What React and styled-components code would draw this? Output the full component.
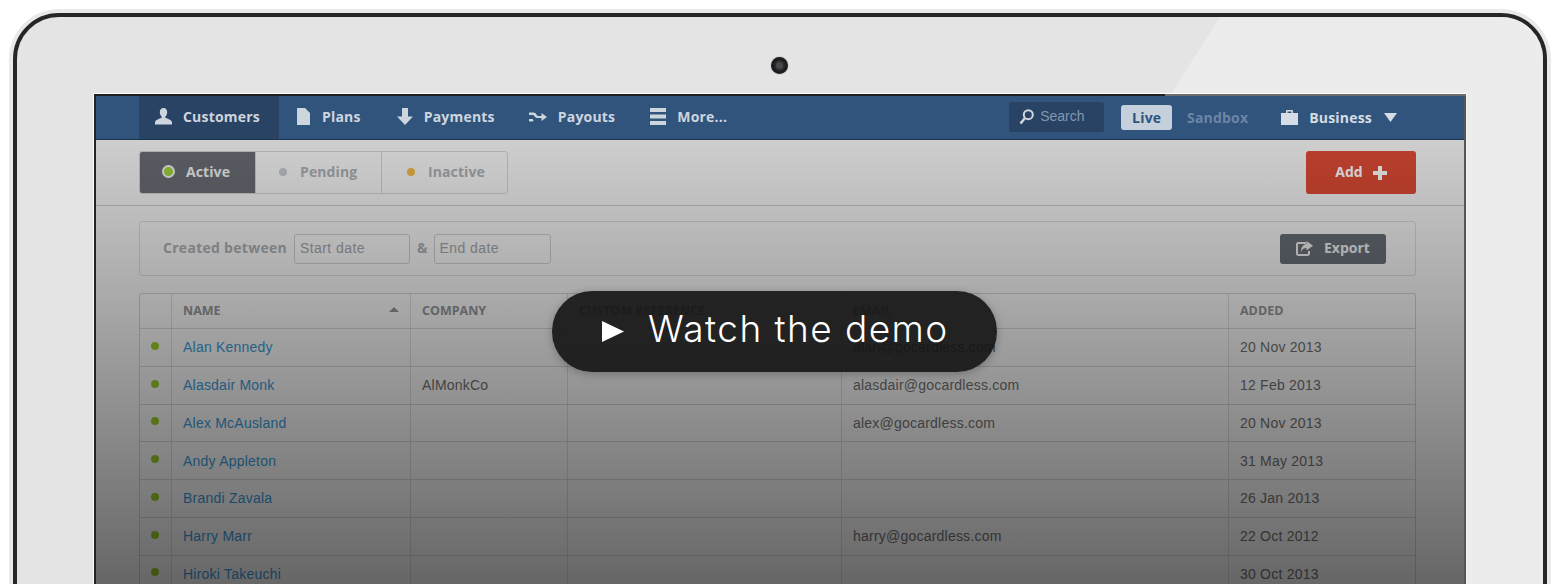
import React from "react";
import styled, { createGlobalStyle } from "styled-components";

const Global = createGlobalStyle`
  html, body { margin: 0; height: 584px; overflow: hidden; background: #fff; }
  * { box-sizing: border-box; }
  body { font-family: "Liberation Sans", Arial, sans-serif; }
`;
const UI = `"Open Sans", "Liberation Sans", sans-serif`;

const Frame = styled.div`
  position: relative; margin: 13px 13px 0; height: 640px; border: 4px solid #262626; border-radius: 46px;
  background: #e4e4e4; box-shadow: 0 0 0 4px #e9e9e9;
  display: flex; flex-direction: column; align-items: center; padding: 40px 77px 0; overflow: hidden;
`;
const Glare = styled.div`
  position: absolute; inset: 0; background: #ececec;
  clip-path: polygon(1203px 0, 100% 0, 100% 100%, 800px 100%);
`;
const Camera = styled.div`
  position: relative; width: 17px; height: 17px; border-radius: 50%; background: #2b2b2b;
  border: 3px solid #1c1c1c; box-shadow: 0 0 0 1px #cfcfcf; flex: none; margin: 0 2px 20px 0;
  &::after { content: ""; position: absolute; inset: 2px; border-radius: 50%; background: #45484c; }
`;
const Screen = styled.div`
  position: relative; width: 1372px; flex: none; background: #f4f4f4;
  box-shadow: 0 -1px 0 #fff, -1px 0 0 #fff, 1px 0 0 #f2f2f2;
  border-left: 2px solid #222; border-right: 2px solid #555; height: 520px;
`;
const TopEdge = styled.div`
  position: relative; margin: 0 -2px; height: 2px;
  background: linear-gradient(to right, #1f1f1f 1071px, #6d6d6d 1071px);
`;
const Nav = styled.nav`
  height: 44px; background: #31547c; border-bottom: 1px solid #1d3450; padding-left: 43px;
  display: flex; align-items: stretch; font: 700 14px ${UI}; letter-spacing: .2px;
`;
const Tab = styled.a`
  display: flex; align-items: center; gap: ${p => p.$gap || 11}px; padding: 0 ${p => p.$pr || 18}px 2px ${p => p.$pl || 17}px;
  color: #cdd5df; background: ${p => (p.$active ? "#294364" : "transparent")};
  svg { flex: none; }
`;
const NavRight = styled.div`
  margin-left: auto; padding-right: 67px; display: flex; align-items: center;
`;
const Search = styled.div`
  width: 95px; height: 30px; margin-top: -2px; background: #294364; border-radius: 3px; padding: 0 0 2px 10px;
  display: flex; align-items: center; gap: 6px; font: 400 14px "Liberation Sans", sans-serif; letter-spacing: 0; color: #8397b0;
`;
const Env = styled.span`
  height: 25px; display: flex; align-items: center; justify-content: center; border-radius: 3px;
  margin-left: ${p => p.$ml}px; width: ${p => p.$w}px;
  background: ${p => (p.$on ? "#c6d0dc" : "transparent")}; color: ${p => (p.$on ? "#2f537d" : "#6b86a5")};
`;
const Business = styled.span`
  display: flex; align-items: center; margin-left: 33px; color: #d5dce5;
`;
const BusinessLabel = styled.span` margin: 0 12px 0 11px; `;
const Toolbar = styled.div`
  height: 66px; border-bottom: 1px solid #c9c9c9; padding: 11px 48px 0 43px;
  display: flex; justify-content: space-between; align-items: flex-start;
`;
const Segments = styled.div`
  display: flex; height: 43px; border: 1px solid #d0d0d0; border-radius: 3px; overflow: hidden; font: 700 14px ${UI}; letter-spacing: .1px;
`;
const Segment = styled.div`
  width: ${p => p.$w}px; display: flex; align-items: center; gap: ${p => p.$gap}px; padding: 0 0 2px ${p => p.$pl}px;
  background: ${p => (p.$active ? "#686c73" : "transparent")}; color: ${p => (p.$active ? "#f0f0f0" : "#aaaeb3")};
  & + & { border-left: 1px solid #d0d0d0; }
`;
const Dot = styled.span`
  flex: none; width: 8px; height: 8px; border-radius: 50%; background: ${p => p.$c};
`;
const RingDot = styled.span`
  flex: none; width: 13px; height: 13px; border-radius: 50%; background: #9fd037; border: 2px solid #f0f0f0;
`;
const AddButton = styled.div`
  width: 110px; height: 43px; background: #dc4a34; border-radius: 3px; color: #fff; font: 700 14px ${UI};
  display: flex; align-items: center; justify-content: center; gap: 10px; padding-bottom: 2px;
`;
const Filter = styled.div`
  margin: 15px 48px 0 43px; height: 55px; border: 1px solid #d8d8d8; border-radius: 3px;
  display: flex; align-items: center; padding: 0 29px 0 23px;
`;
const FilterLabel = styled.span` font: 700 14px ${UI}; letter-spacing: .28px; color: #a9acb0; padding-bottom: 2px; `;
const DateInput = styled.div`
  width: ${p => p.$w}px; height: 30px; border: 1px solid #cdcdcd; border-radius: 3px; background: rgba(255,255,255,.15);
  padding-left: 5px; font-size: 14px; letter-spacing: .42px; line-height: 26px; color: #a0a3a7; margin-left: ${p => p.$ml}px;
`;
const Amp = styled.span` margin-left: 7px; font: 700 14px ${UI}; color: #a9acb0; padding-bottom: 2px; `;
const Export = styled.div`
  margin-left: auto; width: 106px; height: 30px; background: #676d76; border-radius: 3px; color: #eee;
  display: flex; align-items: center; gap: 11px; padding: 0 0 2px 16px; font: 700 14px ${UI};
`;
const Table = styled.div`
  margin: 17px 48px 0 43px; border: 1px solid #cfcfcf; border-bottom: none; border-radius: 3px 3px 0 0;
`;
const Row = styled.div`
  display: grid; grid-template-columns: 32px 239px 157px 274px 387px 186px;
  height: ${p => (p.$head ? 35 : 37.75)}px; border-bottom: 1px solid #d2d2d2;
`;
const Cell = styled.div`
  position: relative; padding-left: 11px; display: flex; align-items: center; font-size: 14px; letter-spacing: .22px; color: #6e6e6e;
  &:not(:last-child) { border-right: 1px solid #d8d8d8; }
`;
const HeadCell = styled(Cell)`
  font: 700 12.5px ${UI}; letter-spacing: 0; color: #8f9297; text-transform: uppercase; padding-bottom: 2px;
`;
const Name = styled.a` color: #3a96d2; `;
const StatusCell = styled(Cell)` padding: 0 0 3px 11px; `;
const Status = styled.span` width: 8px; height: 8px; border-radius: 50%; background: #98c628; `;
const SortCaret = styled.span`
  position: absolute; right: 11px; top: 13px; border: 5px solid transparent; border-top: none; border-bottom: 5px solid #8f9297;
`;
const Shade = styled.div`
  position: absolute; left: 0; right: 0; top: 46px; height: 444px; pointer-events: none;
  background: linear-gradient(to bottom, rgba(0,0,0,.155), rgba(0,0,0,.58));
`;
const Pill = styled.div`
  position: absolute; left: 456px; top: 197px; width: 445px; height: 81px; border-radius: 40px;
  background: rgba(20,20,20,.9); box-shadow: 0 2px 8px rgba(0,0,0,.25); color: #fff;
  display: flex; align-items: center; padding-left: 50px; gap: 24px;
  font: 300 37px Inter, "Open Sans", sans-serif; letter-spacing: 1.45px;
`;
const PillLabel = styled.span` margin-top: -6px; white-space: nowrap; `;

const rows = [
  ["Alan Kennedy", "", "alan@gocardless.com", "20 Nov 2013"],
  ["Alasdair Monk", "AlMonkCo", "alasdair@gocardless.com", "12 Feb 2013"],
  ["Alex McAusland", "", "alex@gocardless.com", "20 Nov 2013"],
  ["Andy Appleton", "", "", "31 May 2013"],
  ["Brandi Zavala", "", "", "26 Jan 2013"],
  ["Harry Marr", "", "harry@gocardless.com", "22 Oct 2012"],
  ["Hiroki Takeuchi", "", "", "30 Oct 2013"],
];

const Ic = { fill: "#cdd5df" };
const PersonIcon = () => (
  <svg width="17" height="17" viewBox="0 0 17 17" {...Ic}>
    <path d="M8.500 0C6 0 4.800 1.900 4.800 4.200c0 1.900.8 3.400 1.800 4.200v1.400C4.200 10.800.6 11.800 0 14.200V16.400h17v-2.200c-.6-2.400-4.200-3.400-6.600-4.400V8.400c1-.8 1.800-2.300 1.800-4.200C12.200 1.900 11 0 8.500 0z" />
  </svg>
);
const DocIcon = () => (
  <svg width="13" height="17" viewBox="0 0 13 17" {...Ic}>
    <path d="M0 0h8l5 5v12H0z" />
  </svg>
);
const ArrowIcon = () => (
  <svg width="16" height="17" viewBox="0 0 16 17" {...Ic}>
    <path d="M5 0h6v8.500h5L8 17 0 8.500h5z" />
  </svg>
);
const PayoutIcon = () => (
  <svg width="18" height="12" viewBox="0 0 18 12" {...Ic}>
    <path d="M0 1.500h4.500c1.500 0 2.300.9 3 2l1 1.500h4V2l5.500 4-5.500 4V7h-4.500c-1.300 0-2-.8-2.700-1.900L4.400 4H0zM0 8h3.600l1 1.500c-.5.7-1 1-2 1H0z" />
  </svg>
);
const MenuIcon = () => (
  <svg width="16" height="17" viewBox="0 0 16 17" {...Ic}>
    <path d="M0 0h16v4H0zM0 6.500h16v4H0zM0 13h16v4H0z" />
  </svg>
);
const SearchIcon = () => (
  <svg width="15" height="16" viewBox="0 0 15 16" fill="none" stroke="#cdd5df" strokeWidth="2" style={{ marginTop: 2 }}>
    <circle cx="9.300" cy="5.700" r="4.500" />
    <path d="M6 9 1.500 14.500" strokeWidth="2.500" />
  </svg>
);
const BriefcaseIcon = () => (
  <svg width="17" height="15" viewBox="0 0 17 15" fill="#d5dce5">
    <path d="M5 3V1.200C5 .5 5.500 0 6.200 0h4.600c.7 0 1.200.5 1.200 1.200V3h5v12H0V3zm1.500 0h4V1.500h-4z" fillRule="evenodd" />
  </svg>
);
const CaretDown = () => (
  <svg width="13" height="9" viewBox="0 0 13 9" fill="#d5dce5"><path d="M0 0h13L6.500 9z" /></svg>
);
const PlusIcon = () => (
  <svg width="14" height="14" viewBox="0 0 14 14" fill="#fff" style={{ marginTop: 2 }}><path d="M5 0h4v5h5v4H9v5H5V9H0V5h5z" /></svg>
);
const ExportIcon = () => (
  <svg width="17" height="15" viewBox="0 0 17 15" style={{ marginTop: 2 }}>
    <path d="M10 2H2.500C1.700 2 1 2.700 1 3.500v9c0 .8.700 1.500 1.500 1.500h9c.8 0 1.500-.7 1.500-1.500V10" fill="none" stroke="#eee" strokeWidth="2" />
    <path d="M10.500 0 17 4.800l-6.500 4.700V7C7.500 7 6 8.500 5 11c0-4.500 2-7.500 5.500-8z" fill="#eee" />
  </svg>
);
const PlayIcon = () => (
  <svg width="22" height="21" viewBox="0 0 22 21" fill="#fff" style={{ flex: "none" }}><path d="M0 0l22 10.500L0 21z" /></svg>
);

export default function App() {
  return (
    <>
      <Global />
      <Frame>
        <Glare />
        <Camera />
        <Screen>
          <TopEdge />
          <Nav>
            <Tab $active $pl={16} $pr={19}><PersonIcon />Customers</Tab>
            <Tab $gap={12} $pl={18} $pr={19}><DocIcon />Plans</Tab>
            <Tab><ArrowIcon />Payments</Tab>
            <Tab $pl={16}><PayoutIcon />Payouts</Tab>
            <Tab $gap={11}><MenuIcon />More...</Tab>
            <NavRight>
              <Search><SearchIcon />Search</Search>
              <Env $on $ml={17} $w={51}>Live</Env>
              <Env $ml={15} $w={61}>Sandbox</Env>
              <Business><BriefcaseIcon /><BusinessLabel>Business</BusinessLabel><CaretDown /></Business>
            </NavRight>
          </Nav>
          <Toolbar>
            <Segments>
              <Segment $active $w={115} $pl={22} $gap={11}><RingDot />Active</Segment>
              <Segment $w={126} $pl={23} $gap={13}><Dot $c="#c3c8cd" />Pending</Segment>
              <Segment $w={126} $pl={25} $gap={13}><Dot $c="#f3b745" />Inactive</Segment>
            </Segments>
            <AddButton>Add<PlusIcon /></AddButton>
          </Toolbar>
          <Filter>
            <FilterLabel>Created between</FilterLabel>
            <DateInput $w={116} $ml={7}>Start date</DateInput>
            <Amp>&amp;</Amp>
            <DateInput $w={117} $ml={6}>End date</DateInput>
            <Export><ExportIcon />Export</Export>
          </Filter>
          <Table>
            <Row $head>
              <HeadCell />
              <HeadCell>Name<SortCaret /></HeadCell>
              <HeadCell>Company</HeadCell>
              <HeadCell>Custom reference</HeadCell>
              <HeadCell>Email</HeadCell>
              <HeadCell>Added</HeadCell>
            </Row>
            {rows.map(r => (
              <Row key={r[0]}>
                <StatusCell><Status /></StatusCell>
                <Cell><Name>{r[0]}</Name></Cell>
                <Cell>{r[1]}</Cell>
                <Cell />
                <Cell>{r[2]}</Cell>
                <Cell>{r[3]}</Cell>
              </Row>
            ))}
          </Table>
          <Shade />
          <Pill><PlayIcon /><PillLabel>Watch the demo</PillLabel></Pill>
        </Screen>
      </Frame>
    </>
  );
}
